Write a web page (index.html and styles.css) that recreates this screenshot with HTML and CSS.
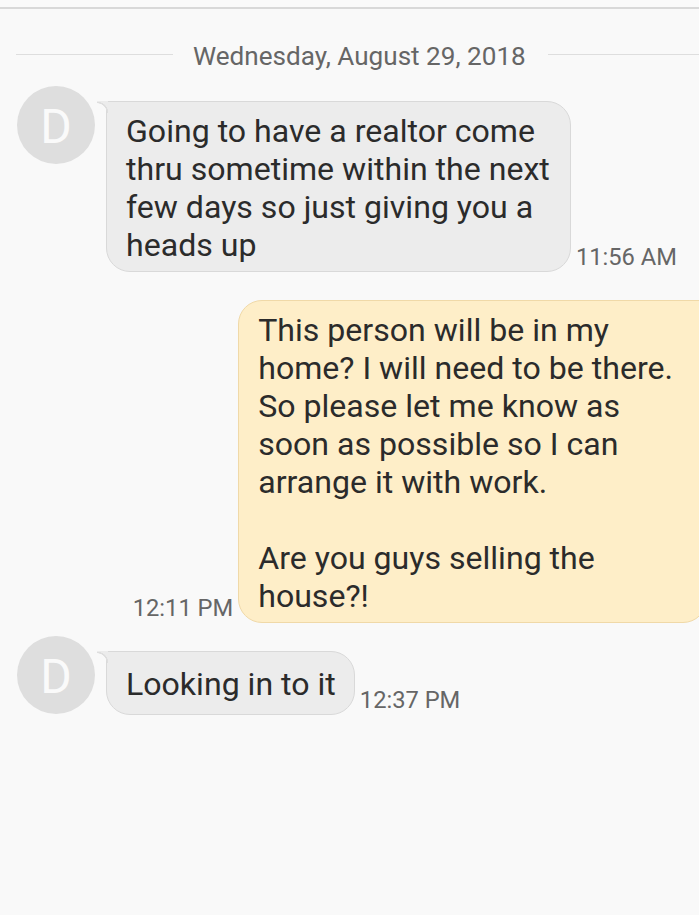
FILE: index.html
```html
<!DOCTYPE html>
<html lang="en">
<head>
    <meta charset="UTF-8">
    <meta name="viewport" content="width=device-width, initial-scale=1.0">
    <title>Messages</title>
    <link rel="stylesheet" href="styles.css">
</head>
<body>
    <div class="topbar"></div>
    <div class="date-row">
        <span class="date-line date-line-left"></span>
        <span class="date-text">Wednesday, August 29, 2018</span>
        <span class="date-line"></span>
    </div>

    <div class="msg msg-in first">
        <div class="avatar">D</div>
        <div class="bubble bubble-in">Going to have a realtor come<br>thru sometime within the next<br>few days so just giving you a<br>heads up</div>
        <span class="time">11:56 AM</span>
    </div>

    <div class="msg msg-out">
        <span class="time">12:11 PM</span>
        <div class="bubble bubble-out">This person will be in my<br>home? I will need to be there.<br>So please let me know as<br>soon as possible so I can<br>arrange it with work.<br><br>Are you guys selling the<br>house?!</div>
    </div>

    <div class="msg msg-in last">
        <div class="avatar">D</div>
        <div class="bubble bubble-in bubble-short">Looking in to it</div>
        <span class="time">12:37 PM</span>
    </div>
</body>
</html>
```

FILE: styles.css
```css
html, body {
    height: 100%;
}
body {
    margin: 0;
    overflow: hidden;
    background-color: #f9f9f9;
    font-family: Roboto, "Liberation Sans", sans-serif;
    color: #2b2b2b;
}
.topbar {
    height: 7px;
    border-bottom: 2px solid #d9d9d9;
    background-color: #fafafa;
}
.date-row {
    display: flex;
    align-items: center;
    height: 28px;
    margin-top: 33px;
    padding-left: 16px;
}
.date-line {
    flex: 1;
    height: 1px;
    margin-bottom: 3px;
    background-color: #dedede;
}
.date-line-left {
    flex: none;
    width: 157px;
}
.date-text {
    margin: 0 22px 0 20px;
    font-size: 26.1px;
    color: #666;
    white-space: nowrap;
}
.msg {
    display: flex;
    align-items: flex-end;
    white-space: nowrap;
}
.msg-in {
    padding-left: 17px;
}
.msg-in.first {
    margin-top: 16px;
}
.msg-in.last {
    margin-top: 13px;
}
.msg-out {
    justify-content: flex-end;
    margin-top: 28px;
    margin-right: -8px;
}
.avatar {
    align-self: flex-start;
    flex: none;
    width: 78px;
    height: 78px;
    margin-right: 11px;
    border-radius: 50%;
    background-color: #dedede;
    color: #fafafa;
    font-size: 48px;
    line-height: 82px;
    text-align: center;
}
.bubble {
    position: relative;
    font-size: 32.1px;
    line-height: 38px;
}
.bubble-in {
    margin-top: 15px;
    padding: 10px 20px 7px 19px;
    border: 1px solid #d9d9d9;
    border-radius: 0 24px 24px 24px;
    background-color: #ececec;
}
.bubble-short {
    padding: 13px 18px 11px 19px;
}
/* little curved tail at the corner of the bubble */
.bubble-in::before {
    content: "";
    position: absolute;
    top: -1px;
    left: -10px;
    width: 11px;
    height: 12px;
    background: radial-gradient(circle at 0 100%, transparent 9.5px, #dedede 10px, #dedede 11px, #ececec 11.5px);
}
.bubble-out {
    padding: 10px 33px 7px 19px;
    border: 1px solid #f0d9a8;
    border-radius: 24px 0 24px 24px;
    background-color: #feeec8;
}
.time {
    flex: none;
    margin: 0 5px;
    font-size: 23.7px;
    line-height: 30px;
    color: #666;
}
```
